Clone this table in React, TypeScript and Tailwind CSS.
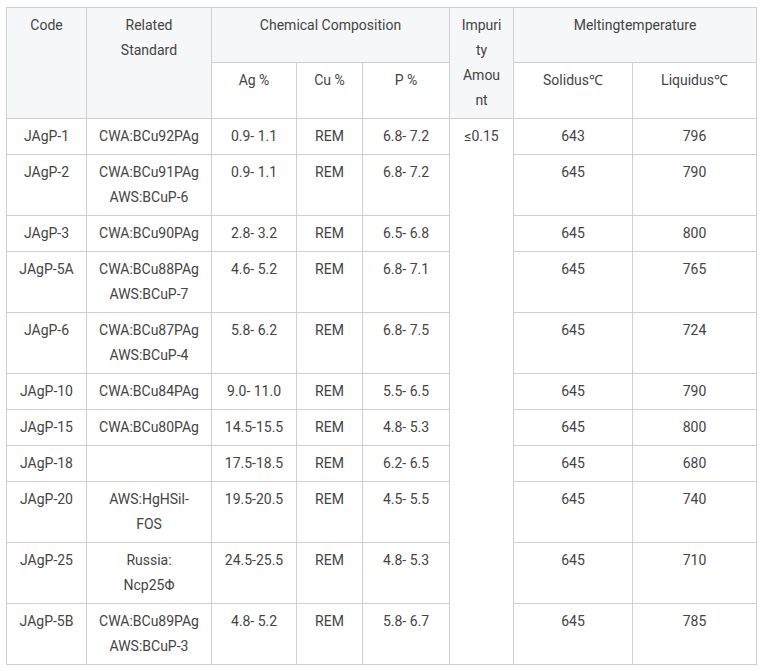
import React from "react"

type Row = {
  code: string
  standard: string[]
  ag: string
  cu: string
  p: string
  solidus: string
  liquidus: string
}

const rows: Row[] = [
  { code: "JAgP-1", standard: ["CWA:BCu92PAg"], ag: "0.9- 1.1", cu: "REM", p: "6.8- 7.2", solidus: "643", liquidus: "796" },
  { code: "JAgP-2", standard: ["CWA:BCu91PAg", "AWS:BCuP-6"], ag: "0.9- 1.1", cu: "REM", p: "6.8- 7.2", solidus: "645", liquidus: "790" },
  { code: "JAgP-3", standard: ["CWA:BCu90PAg"], ag: "2.8- 3.2", cu: "REM", p: "6.5- 6.8", solidus: "645", liquidus: "800" },
  { code: "JAgP-5A", standard: ["CWA:BCu88PAg", "AWS:BCuP-7"], ag: "4.6- 5.2", cu: "REM", p: "6.8- 7.1", solidus: "645", liquidus: "765" },
  { code: "JAgP-6", standard: ["CWA:BCu87PAg", "AWS:BCuP-4"], ag: "5.8- 6.2", cu: "REM", p: "6.8- 7.5", solidus: "645", liquidus: "724" },
  { code: "JAgP-10", standard: ["CWA:BCu84PAg"], ag: "9.0- 11.0", cu: "REM", p: "5.5- 6.5", solidus: "645", liquidus: "790" },
  { code: "JAgP-15", standard: ["CWA:BCu80PAg"], ag: "14.5-15.5", cu: "REM", p: "4.8- 5.3", solidus: "645", liquidus: "800" },
  { code: "JAgP-18", standard: [], ag: "17.5-18.5", cu: "REM", p: "6.2- 6.5", solidus: "645", liquidus: "680" },
  { code: "JAgP-20", standard: ["AWS:HgHSil-", "FOS"], ag: "19.5-20.5", cu: "REM", p: "4.5- 5.5", solidus: "645", liquidus: "740" },
  { code: "JAgP-25", standard: ["Russia:", "Ncp25Φ"], ag: "24.5-25.5", cu: "REM", p: "4.8- 5.3", solidus: "645", liquidus: "710" },
  { code: "JAgP-5B", standard: ["CWA:BCu89PAg", "AWS:BCuP-3"], ag: "4.8- 5.2", cu: "REM", p: "5.8- 6.7", solidus: "645", liquidus: "785" },
]

const cell = "border border-[#cfcfcf] px-[10px] py-[5px] text-center align-top font-normal"
const head = cell + " bg-[#f5f7f8]"

export default function App() {
  return (
    <div className="bg-white pl-[6px] pt-[7px] pb-[7px] text-[14px] leading-[25px] text-[#444] [font-family:Roboto,'Liberation_Sans',sans-serif]">
      <table className="w-[750px] table-fixed border-collapse">
        <colgroup>
          <col className="w-[80px]" />
          <col className="w-[125px]" />
          <col className="w-[85px]" />
          <col className="w-[66px]" />
          <col className="w-[87px]" />
          <col className="w-[64px]" />
          <col className="w-[119px]" />
          <col className="w-[124px]" />
        </colgroup>
        <thead>
          <tr className="h-[55px]">
            <th rowSpan={2} className={head}>Code</th>
            <th rowSpan={2} className={head}>Related<br />Standard</th>
            <th colSpan={3} className={head}>Chemical Composition</th>
            <th rowSpan={2} className={head + " break-all"}>Impurity<br />Amount</th>
            <th colSpan={2} className={head}>Meltingtemperature</th>
          </tr>
          <tr className="h-[56px]">
            <th className={cell}>Ag %</th>
            <th className={cell}>Cu %</th>
            <th className={cell}>P %</th>
            <th className={cell}>Solidus℃</th>
            <th className={cell}>Liquidus℃</th>
          </tr>
        </thead>
        <tbody>
          {rows.map((r, i) => (
            <tr key={r.code}>
              <td className={cell}>{r.code}</td>
              <td className={cell}>
                {r.standard.map((s) => (
                  <div key={s}>{s}</div>
                ))}
              </td>
              <td className={cell}>{r.ag}</td>
              <td className={cell}>{r.cu}</td>
              <td className={cell}>{r.p}</td>
              {i === 0 && (
                <td rowSpan={rows.length} className={cell}>≤0.15</td>
              )}
              <td className={cell}>{r.solidus}</td>
              <td className={cell}>{r.liquidus}</td>
            </tr>
          ))}
        </tbody>
      </table>
    </div>
  )
}
